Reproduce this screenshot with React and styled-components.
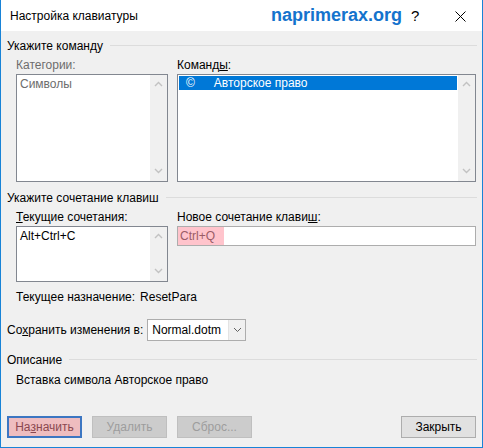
import React from "react";
import styled, { createGlobalStyle } from "styled-components";

const Global = createGlobalStyle`
	html, body {
		margin: 0;
		padding: 0;
		background: #ffffff;
	}
	* {
		box-sizing: border-box;
	}
`;

const Chevron = ({ up }) => (
	<svg width="9" height="6" viewBox="0 0 9 6">
		<path
			d={up ? "M1 5 L4.5 1.5 L8 5" : "M1 1 L4.5 4.5 L8 1"}
			fill="none"
			stroke="#c2c2c2"
			strokeWidth="1.4"
		/>
	</svg>
);

const ListBox = ({ height, children }) => (
	<Box height={height}>
		<BoxContent>{children}</BoxContent>
		<Scroll>
			<Chevron up />
			<Chevron />
		</Scroll>
	</Box>
);

const App = () => {
	return (
		<>
			<Global />
			<Window>
				<TitleBar>
					<Title>Настройка клавиатуры</Title>
					<Brand>naprimerax.org</Brand>
					<Help>?</Help>
					<Close>
						<svg width="11" height="11" viewBox="0 0 11 11">
							<path d="M0.5 0.5 L10.5 10.5 M10.5 0.5 L0.5 10.5" stroke="#000" strokeWidth="1" />
						</svg>
					</Close>
				</TitleBar>
				<Body>
					<GroupHeader top={7}>
						<span>Укажите команду</span>
						<Line />
					</GroupHeader>
					<Columns top={5}>
						<Column>
							<Label muted>Категории:</Label>
							<ListBox height={108}>
								<Item muted>Символы</Item>
							</ListBox>
						</Column>
						<Column>
							<Label>
								Команд<u>ы</u>:
							</Label>
							<ListBox height={108}>
								<Selected>
									<span>©</span>
									<span>Авторское право</span>
								</Selected>
							</ListBox>
						</Column>
					</Columns>
					<GroupHeader top={8}>
						<span>Укажите сочетание клавиш</span>
						<Line />
					</GroupHeader>
					<Columns top={5}>
						<Column>
							<Label>
								<u>Т</u>екущие сочетания:
							</Label>
							<ListBox height={56}>
								<Item>Alt+Ctrl+C</Item>
							</ListBox>
						</Column>
						<Column>
							<Label>
								Новое сочетание клави<u>ш</u>:
							</Label>
							<Input>
								<Highlight>Ctrl+Q</Highlight>
							</Input>
						</Column>
					</Columns>
					<Assigned>
						<span>Текущее назначение:</span>
						<span>ResetPara</span>
					</Assigned>
					<SaveRow>
						<span>
							Со<u>х</u>ранить изменения в:
						</span>
						<Combo>
							<ComboText>Normal.dotm</ComboText>
							<ComboButton>
								<svg width="9" height="6" viewBox="0 0 9 6">
									<path d="M1 1 L4.5 4.5 L8 1" fill="none" stroke="#606060" strokeWidth="1" />
								</svg>
							</ComboButton>
						</Combo>
					</SaveRow>
					<GroupHeader top={11}>
						<span>Описание</span>
						<Line />
					</GroupHeader>
					<Description>Вставка символа Авторское право</Description>
					<Buttons>
						<Button variant="primary">
							На<u>з</u>начить
						</Button>
						<Button variant="disabled">Удалить</Button>
						<Button variant="disabled">Сброс...</Button>
						<Spacer />
						<Button>Закрыть</Button>
					</Buttons>
				</Body>
			</Window>
		</>
	);
};

const Window = styled.div`
	width: 483px;
	height: 448px;
	display: flex;
	flex-direction: column;
	border: 1px solid #1883d7;
	border-top: none;
	background: #f0f0f0;
	font-family: "Liberation Sans", Arial, sans-serif;
	font-size: 12px;
	color: #000;
`;

const TitleBar = styled.div`
	height: 31px;
	background: #ffffff;
	display: flex;
	align-items: center;
	padding: 0 0 0 9px;
`;

const Title = styled.div`
	font-size: 12px;
	color: #000;
	flex: 1;
`;

const Brand = styled.div`
	font-size: 18px;
	font-weight: bold;
	color: #1473cd;
	margin-right: 9px;
`;

const Help = styled.div`
	font-size: 15px;
	width: 10px;
	margin-right: 34px;
`;

const Close = styled.div`
	width: 27px;
	display: flex;
	align-items: center;
	padding-top: 1px;
`;

const Body = styled.div`
	flex: 1;
	display: flex;
	flex-direction: column;
	padding: 0 5px 9px 6px;
`;

const GroupHeader = styled.div`
	margin-top: ${(p) => p.top}px;
	height: 15px;
	display: flex;
	align-items: center;
	gap: 7px;
	white-space: nowrap;
`;

const Line = styled.div`
	flex: 1;
	height: 1px;
	background: #dcdcdc;
`;

const Columns = styled.div`
	margin-top: ${(p) => p.top}px;
	padding-left: 9px;
	display: grid;
	grid-template-columns: 152px 299px;
	column-gap: 9px;
`;

const Column = styled.div`
	display: flex;
	flex-direction: column;
`;

const Label = styled.div`
	height: 15px;
	line-height: 15px;
	margin-bottom: 1px;
	color: ${(p) => (p.muted ? "#6d6d6d" : "#000")};
	white-space: nowrap;
`;

const Box = styled.div`
	height: ${(p) => p.height}px;
	border: 1px solid #828790;
	background: #ffffff;
	display: flex;
`;

const BoxContent = styled.div`
	flex: 1;
	padding: 1px;
`;

const Scroll = styled.div`
	width: 17px;
	background: #f0f0f0;
	display: flex;
	flex-direction: column;
	justify-content: space-between;
	align-items: center;
	padding: 6px 0 7px;
`;

const Item = styled.div`
	height: 15px;
	line-height: 15px;
	padding-left: 2px;
	margin-top: 1px;
	color: ${(p) => (p.muted ? "#6d6d6d" : "#000")};
`;

const Selected = styled.div`
	height: 14px;
	line-height: 14px;
	background: #0078d7;
	color: #fff;
	display: flex;
	gap: 19px;
	padding-left: 7px;
`;

const Input = styled.div`
	height: 20px;
	border: 1px solid #adadad;
	background: #ffffff;
	display: flex;
	align-items: stretch;
`;

const Highlight = styled.div`
	width: 46px;
	background: #ffc4cc;
	color: #9a5c66;
	line-height: 18px;
	padding-left: 2px;
`;

const Assigned = styled.div`
	margin-top: 8px;
	padding-left: 9px;
	height: 15px;
	line-height: 15px;
	display: flex;
	gap: 5px;
`;

const SaveRow = styled.div`
	margin-top: 14px;
	height: 22px;
	display: flex;
	align-items: center;
	gap: 4px;
`;

const Combo = styled.div`
	width: 99px;
	height: 22px;
	border: 1px solid #adadad;
	background: #ffffff;
	display: flex;
`;

const ComboText = styled.div`
	flex: 1;
	line-height: 20px;
	padding-left: 4px;
`;

const ComboButton = styled.div`
	width: 17px;
	background: #f0f0f0;
	border-left: 1px solid #e3e3e3;
	display: flex;
	align-items: center;
	justify-content: center;
`;

const Description = styled.div`
	margin-top: 6px;
	padding-left: 9px;
	height: 15px;
	line-height: 15px;
`;

const Buttons = styled.div`
	margin-top: auto;
	display: flex;
	gap: 10px;
	padding-right: 1px;
`;

const Spacer = styled.div`
	flex: 1;
`;

const buttonColors = {
	primary: { bg: "#efbdbf", border: "2px solid #3c76c2", color: "#8a4850" },
	disabled: { bg: "#cccccc", border: "1px solid #bfbfbf", color: "#9d9d9d" },
	normal: { bg: "#e1e1e1", border: "1px solid #adadad", color: "#000" },
};

const Button = styled.div`
	width: 75px;
	height: 22px;
	display: flex;
	align-items: center;
	justify-content: center;
	background: ${(p) => buttonColors[p.variant || "normal"].bg};
	border: ${(p) => buttonColors[p.variant || "normal"].border};
	color: ${(p) => buttonColors[p.variant || "normal"].color};
`;

export default App;
